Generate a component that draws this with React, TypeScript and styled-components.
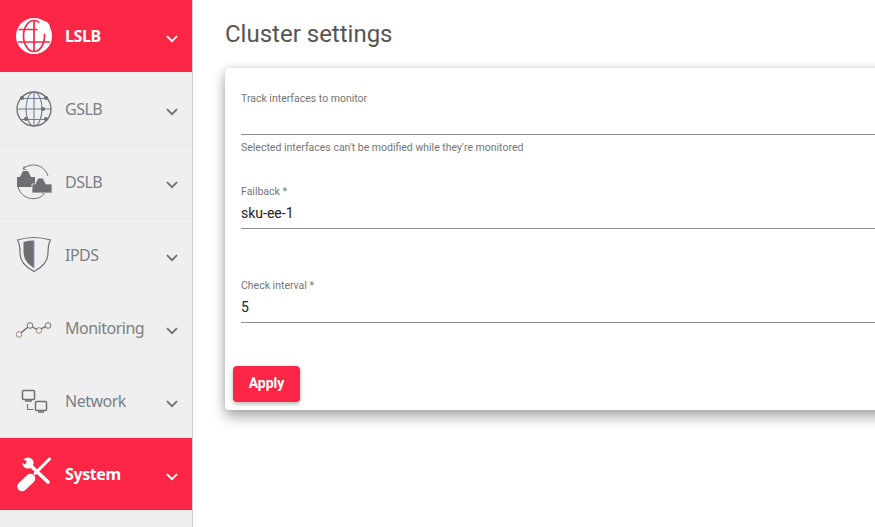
import React from "react";
import styled, { createGlobalStyle } from "styled-components";

const RED = "#fb2646";
const GREY = "#6f6f73";

const GlobalStyle = createGlobalStyle`
  html, body {
    margin: 0;
    height: 100%;
    overflow: hidden;
    background: #fff;
  }
  #root {
    height: 100%;
  }
`;

const LslbIcon = () => (
  <svg width="38" height="38" viewBox="0 0 38 38">
    <circle cx="19" cy="19" r="18" fill="#fff" />
    <g fill="none" stroke={RED} strokeWidth="1.7">
      <ellipse cx="19" cy="19" rx="10.5" ry="15.5" />
      <path d="M19 3.5v31M3.5 12.5h31M3 25h32" />
    </g>
    <circle cx="28.5" cy="10.5" r="6.5" fill="#fff" />
  </svg>
);

const GslbIcon = () => (
  <svg width="38" height="38" viewBox="0 0 38 38">
    <circle cx="19" cy="19" r="17" fill="none" stroke={GREY} strokeWidth="1.3" />
    <g fill="none" stroke="#6f7f94" strokeWidth="1.1">
      <ellipse cx="19" cy="19" rx="8" ry="17" />
      <path d="M19 2v34M5 8.5h28M2 19h34M5 29.5h28" />
    </g>
    <g fill={GREY}>
      <circle cx="7" cy="8" r="2.1" />
      <circle cx="31" cy="8" r="2.1" />
      <circle cx="28" cy="19" r="2.1" />
      <circle cx="11" cy="29" r="2.1" />
      <circle cx="31" cy="29" r="2.1" />
    </g>
  </svg>
);

const DslbIcon = () => (
  <svg width="38" height="38" viewBox="0 0 38 38">
    <g fill="none" stroke={GREY} strokeWidth="1">
      <path d="M8 6C16 -1 29 1 33 13" />
      <path d="M8 6l1.5-2.8M8 6l3.2.6" />
      <path d="M3 24c3 12 19 16 27 6" />
      <path d="M30 30l-3.2.4M30 30l.2-3.2" />
    </g>
    <path fill={GREY} d="M2 14h3l3-6h5l3 6h4v10H2z" />
    <path fill={GREY} stroke="#efefef" strokeWidth="0.8" d="M17 21h3l3-6h5l3 6h6v9H17z" />
  </svg>
);

const ShieldIcon = () => (
  <svg width="38" height="38" viewBox="0 0 38 38">
    <path
      d="M2.5 4Q19 -1 35.5 4C33 8 33 12 33 17C33 26 26 32 19 35.5C12 32 5 26 5 17C5 12 5 8 2.5 4Z"
      fill="none"
      stroke={GREY}
      strokeWidth="1.2"
    />
    <path d="M8.5 6Q14 4.6 19 4.6V32C11 27 8.5 22 8.5 15Z" fill={GREY} />
    <path d="M19 4.6V32" stroke="#7a9cc4" strokeWidth="0.9" />
  </svg>
);

const GraphIcon = () => (
  <svg width="38" height="20" viewBox="0 0 38 20">
    <g fill="none" strokeWidth="1">
      <circle cx="4" cy="16.5" r="2.8" stroke="#a58a70" />
      <circle cx="15" cy="7.5" r="2.8" stroke={GREY} />
      <circle cx="24" cy="12.5" r="2.8" stroke="#a58a70" />
      <circle cx="33" cy="7.5" r="2.8" stroke={GREY} />
      <path d="M6.2 14.6l6.5-5.4M17.4 9l4.2 2.2M26.2 10.6l4.5-2" stroke={GREY} strokeWidth="1.4" />
    </g>
  </svg>
);

const NetworkIcon = () => (
  <svg width="38" height="30" viewBox="0 0 38 30">
    <g fill="none" stroke={GREY} strokeWidth="1.5">
      <rect x="7.5" y="4.5" width="12" height="9" rx="1" />
      <rect x="20.5" y="15.5" width="11" height="9" rx="1" />
      <path d="M12.5 18v5.5h6" strokeWidth="1.1" />
    </g>
    <path d="M10 15h7M23 26h6" stroke={GREY} strokeWidth="1.6" />
  </svg>
);

const ToolsIcon = () => (
  <svg width="38" height="38" viewBox="0 0 38 38">
    <g fill="none" stroke="#fff" strokeLinecap="round">
      <path d="M15 10l18 17" strokeWidth="3.6" />
      <path d="M34.5 4L20 18.5" strokeWidth="3" />
      <path d="M15.5 23.5L7 31.5" strokeWidth="9.5" />
    </g>
    <circle cx="13" cy="8" r="5.6" fill="#fff" />
    <path d="M6 3l6 3.5-1.8 3L5 6.5z" fill={RED} />
  </svg>
);

const Chevron = () => (
  <ChevronSvg width="12" height="8" viewBox="0 0 12 8">
    <path d="M1 1.2l5 5 5-5" fill="none" stroke="currentColor" strokeWidth="1.8" />
  </ChevronSvg>
);

const items = [
  { label: "LSLB", icon: <LslbIcon />, active: true },
  { label: "GSLB", icon: <GslbIcon /> },
  { label: "DSLB", icon: <DslbIcon /> },
  { label: "IPDS", icon: <ShieldIcon /> },
  { label: "Monitoring", icon: <GraphIcon /> },
  { label: "Network", icon: <NetworkIcon /> },
  { label: "System", icon: <ToolsIcon />, active: true },
];

function App() {
  return (
    <Page>
      <GlobalStyle />
      <Sidebar>
        {items.map((item) => (
          <MenuItem key={item.label} $active={item.active}>
            <IconSlot>{item.icon}</IconSlot>
            <MenuLabel $active={item.active}>{item.label}</MenuLabel>
            <Chevron />
          </MenuItem>
        ))}
      </Sidebar>
      <Main>
        <Title>Cluster settings</Title>
        <Card>
          <EmptyField>
            <SmallLabel>Track interfaces to monitor</SmallLabel>
          </EmptyField>
          <Helper>Selected interfaces can't be modified while they're monitored</Helper>
          <Field>
            <SmallLabel>Failback *</SmallLabel>
            <Value>sku-ee-1</Value>
          </Field>
          <Field>
            <SmallLabel>Check interval *</SmallLabel>
            <Value>5</Value>
          </Field>
          <ApplyButton>Apply</ApplyButton>
        </Card>
      </Main>
    </Page>
  );
}

export default App;

const Page = styled.div`
  display: flex;
  width: 875px;
  height: 527px;
  overflow: hidden;
  font-family: Roboto, sans-serif;
`;

const Sidebar = styled.nav`
  flex: 0 0 192px;
  background: #efefef;
  border-right: 1px solid #d0d0d0;
`;

const MenuItem = styled.div<{ $active?: boolean }>`
  display: flex;
  align-items: center;
  height: 73px;
  box-sizing: border-box;
  padding: 0 14px 0 15px;
  color: ${(p) => (p.$active ? "#fff" : GREY)};
  background: ${(p) => (p.$active ? RED : "transparent")};
  border-bottom: 1px solid #e8e8e8;
`;

const IconSlot = styled.div`
  flex: 0 0 38px;
  height: 38px;
  display: flex;
  align-items: center;
  justify-content: center;
`;

const MenuLabel = styled.span<{ $active?: boolean }>`
  flex: 1;
  margin-left: 12px;
  font-family: "Noto Sans", sans-serif;
  font-size: 16px;
  font-weight: ${(p) => (p.$active ? 700 : 400)};
  letter-spacing: ${(p) => (p.$active ? "-0.4px" : "-0.5px")};
  color: ${(p) => (p.$active ? "#fff" : "#7b7f85")};
`;

const ChevronSvg = styled.svg`
  margin-top: 6px;
`;

const Main = styled.main`
  flex: 1;
  min-width: 0;
  padding: 20px 0 0 32px;
`;

const Title = styled.h1`
  margin: 0 0 19px;
  height: 29px;
  font-size: 24px;
  line-height: 29px;
  font-weight: 400;
  color: #555;
`;

const Card = styled.section`
  width: 800px;
  height: 342px;
  box-sizing: border-box;
  padding: 24px 0 0 16px;
  background: #fff;
  border-radius: 4px;
  box-shadow: 0 7px 14px rgba(0, 0, 0, 0.32), 0 0 8px rgba(0, 0, 0, 0.12);
`;

const SmallLabel = styled.div`
  font-size: 10.5px;
  line-height: 14px;
  color: #757575;
`;

const EmptyField = styled.div`
  height: 42px;
  border-bottom: 1px solid #8f8f8f;
`;

const Helper = styled.div`
  margin-top: 6px;
  font-size: 10.5px;
  line-height: 14px;
  color: #757575;
`;

const Field = styled.div`
  margin-top: 30px;
  height: 43px;
  border-bottom: 1px solid #8f8f8f;
  & + & {
    margin-top: 50px;
  }
`;

const Value = styled.div`
  margin-top: 4px;
  font-size: 14px;
  line-height: 20px;
  color: #222;
`;

const ApplyButton = styled.button`
  display: block;
  margin: 43px 0 0 -8px;
  width: 67px;
  height: 36px;
  padding: 0 0 2px;
  border: 0;
  border-radius: 4px;
  background: ${RED};
  color: #fff;
  font-family: Roboto, sans-serif;
  font-size: 14px;
  font-weight: 700;
  box-shadow: 0 2px 4px rgba(0, 0, 0, 0.3);
`;
